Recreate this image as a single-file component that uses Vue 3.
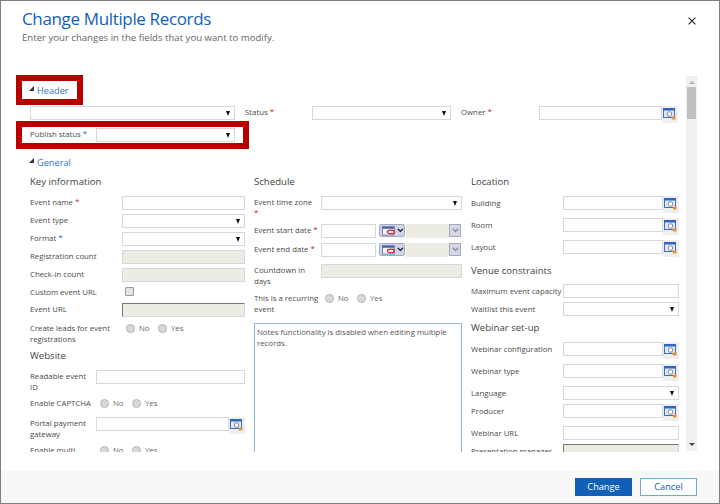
<script setup>
const columns = [
  {
    cls: 'col-a',
    rows: [
      { heading: 'Key information', h: 23 },
      { label: 'Event name', req: 'red', type: 'input', h: 18 },
      { label: 'Event type', type: 'select', h: 18 },
      { label: 'Format', req: 'blue', type: 'select', h: 18 },
      { label: 'Registration count', type: 'readonly', h: 18 },
      { label: 'Check-in count', type: 'readonly', h: 18 },
      { label: 'Custom event URL', type: 'check', h: 17 },
      { label: 'Event URL', type: 'inset', h: 19 },
      { label: 'Create leads for event registrations', type: 'radio', h: 25 },
      { heading: 'Website', h: 23 },
      { label: 'Readable event ID', type: 'input', h: 27, narrow: true },
      { label: 'Enable CAPTCHA', type: 'radio', h: 20, narrow: true, nowrap: true },
      { label: 'Portal payment gateway', type: 'lookup', h: 27, narrow: true },
      { label: 'Enable multi session', type: 'radio', h: 24, narrow: true }
    ]
  },
  {
    cls: 'col-b',
    rows: [
      { heading: 'Schedule', h: 23 },
      { label: 'Event time zone', req: 'red', type: 'select', h: 28, breakReq: true },
      { label: 'Event start date', req: 'red', type: 'date', h: 19 },
      { label: 'Event end date', req: 'red', type: 'date', h: 21 },
      { label: 'Countdown in days', type: 'readonly', h: 28 },
      { label: 'This is a recurring event', type: 'radio', h: 31 }
    ]
  },
  {
    cls: 'col-c',
    rows: [
      { heading: 'Location', h: 23 },
      { label: 'Building', type: 'lookup', h: 22 },
      { label: 'Room', type: 'lookup', h: 22 },
      { label: 'Layout', type: 'lookup', h: 22 },
      { heading: 'Venue constraints', h: 22 },
      { label: 'Maximum event capacity', type: 'input', h: 18 },
      { label: 'Waitlist this event', type: 'select', h: 17 },
      { heading: 'Webinar set-up', h: 23 },
      { label: 'Webinar configuration', type: 'lookup', h: 22 },
      { label: 'Webinar type', type: 'lookup', h: 22 },
      { label: 'Language', type: 'select', h: 18 },
      { label: 'Producer', type: 'lookup', h: 22 },
      { label: 'Webinar URL', type: 'input', h: 18 },
      { label: 'Presentation manager', type: 'inset', h: 22 }
    ]
  }
]
</script>

<template>
  <div class="dialog">
    <svg class="defs" width="0" height="0" aria-hidden="true">
      <symbol id="lookup-icon" viewBox="0 0 13 12">
        <rect x="0.5" y="0.5" width="11" height="9" fill="#dfe8f5" stroke="#3f6fb5" />
        <rect x="0" y="0" width="12" height="2.5" fill="#2f66c0" />
        <circle cx="6.5" cy="6" r="2.3" fill="#fff" stroke="#7c7c7c" stroke-width="0.9" />
        <rect x="9" y="8.5" width="3.5" height="3" fill="#e8922c" />
      </symbol>
      <symbol id="cal-icon" viewBox="0 0 16 10">
        <rect x="0.5" y="0.5" width="13" height="9" fill="#f2f2f8" stroke="#6d78a8" />
        <rect x="0" y="0" width="14" height="2.5" fill="#4a62a8" />
        <ellipse cx="10" cy="6" rx="4" ry="2" fill="none" stroke="#d3202a" stroke-width="1.3" />
      </symbol>
    </svg>

    <header class="head">
      <div>
        <h1 class="title">Change Multiple Records</h1>
        <p class="subtitle">Enter your changes in the fields that you want to modify.</p>
      </div>
      <svg class="close" width="8" height="8" viewBox="0 0 8 8">
        <path d="M.6.6l6.8 6.8M7.4.6L.6 7.4" stroke="#222" stroke-width="1.1" fill="none" />
      </svg>
    </header>

    <div class="viewport">
      <main class="content">
        <div class="section"><i class="tri"></i>Header</div>
        <div class="header-row first">
          <div class="field select w205"><i class="caret"></i></div>
          <span class="hlabel status">Status <b class="req red">*</b></span>
          <div class="field select w139"><i class="caret"></i></div>
          <span class="hlabel owner">Owner <b class="req red">*</b></span>
          <div class="lookup w139">
            <div class="field"></div>
            <span class="lookup-btn"><svg width="13" height="12"><use href="#lookup-icon" /></svg></span>
          </div>
        </div>
        <div class="header-row second">
          <span class="hlabel publish">Publish status <b class="req blue">*</b></span>
          <div class="field select w139"><i class="caret"></i></div>
        </div>
        <div class="section general"><i class="tri"></i>General</div>

        <div class="columns">
          <div v-for="col in columns" :key="col.cls" class="col" :class="col.cls">
            <template v-for="row in col.rows" :key="row.label || row.heading">
              <h2 v-if="row.heading" class="heading" :style="{ height: row.h + 'px' }">{{ row.heading }}</h2>
              <div v-else class="row" :class="{ narrow: row.narrow, nowrap: row.nowrap }" :style="{ height: row.h + 'px' }">
                <label class="label">{{ row.label }}<br v-if="row.breakReq" /><b v-if="row.req" class="req" :class="row.req"> *</b></label>
                <div class="control">
                  <div v-if="row.type === 'input'" class="field"></div>
                  <div v-else-if="row.type === 'readonly'" class="field readonly"></div>
                  <div v-else-if="row.type === 'inset'" class="field readonly inset"></div>
                  <div v-else-if="row.type === 'select'" class="field select"><i class="caret"></i></div>
                  <div v-else-if="row.type === 'check'" class="check"></div>
                  <div v-else-if="row.type === 'radio'" class="radios">
                    <i class="radio"></i><span class="opt no">No</span>
                    <i class="radio"></i><span class="opt">Yes</span>
                  </div>
                  <div v-else-if="row.type === 'lookup'" class="lookup">
                    <div class="field"></div>
                    <span class="lookup-btn"><svg width="13" height="12"><use href="#lookup-icon" /></svg></span>
                  </div>
                  <div v-else-if="row.type === 'date'" class="date">
                    <div class="field date-input"></div>
                    <span class="cal-btn">
                      <svg width="15" height="10"><use href="#cal-icon" /></svg>
                      <svg width="7" height="5" viewBox="0 0 7 5"><path d="M.8.8l2.7 2.7L6.2.8" fill="none" stroke="#111" stroke-width="1.3" /></svg>
                    </span>
                    <div class="field readonly time"></div>
                    <span class="time-btn"><svg width="7" height="5" viewBox="0 0 7 5"><path d="M.8.8l2.7 2.7L6.2.8" fill="none" stroke="#8a8a9a" stroke-width="1.3" /></svg></span>
                  </div>
                </div>
              </div>
            </template>
            <div v-if="col.cls === 'col-b'" class="notes">Notes functionality is disabled when editing multiple records.</div>
          </div>
        </div>
      </main>

      <div class="scrollbar">
        <i class="arrow up"></i>
        <i class="thumb"></i>
        <i class="arrow down"></i>
      </div>
    </div>

    <footer class="foot">
      <button class="btn primary">Change</button>
      <button class="btn">Cancel</button>
    </footer>

    <div class="mark mark-header"></div>
    <div class="mark mark-publish"></div>
  </div>
</template>

<style scoped>
.dialog {
  position: relative;
  width: 720px;
  height: 504px;
  box-sizing: border-box;
  display: flex;
  flex-direction: column;
  background: #fff;
  border: 1px solid #7f7f7f;
  font-family: "Open Sans", "Liberation Sans", sans-serif;
  font-size: 7.8px;
  color: #4a4a4a;
  overflow: hidden;
}
.defs { position: absolute; }
.head {
  height: 75px;
  flex: none;
  display: flex;
  justify-content: space-between;
  padding: 0 23px 0 21px;
  box-sizing: border-box;
}
.title {
  margin: 6px 0 0;
  font-size: 17px;
  line-height: 24px;
  font-weight: 400;
  letter-spacing: -0.35px;
  color: #1160b7;
}
.subtitle {
  margin: 0;
  font-size: 9.6px;
  line-height: 13px;
  color: #666;
}
.close { margin-top: 16px; }
.viewport {
  height: 376px;
  flex: none;
  display: flex;
  overflow: hidden;
}
.content {
  width: 678px;
  padding: 6px 0 0 29px;
  margin-right: 7px;
  flex: none;
  box-sizing: border-box;
}
.section {
  height: 24px;
  display: flex;
  align-items: center;
  padding-bottom: 8px;
  box-sizing: border-box;
  gap: 3px;
  font-size: 9.2px;
  color: #2f76c3;
  margin-left: -1px;
}
.section.general { padding-bottom: 0; height: 22px; }
.tri {
  width: 0;
  height: 0;
  border-left: 5px solid transparent;
  border-bottom: 5px solid #333;
  margin-top: -3px;
}
.header-row {
  display: flex;
  align-items: flex-start;
}
.header-row.first { height: 22px; }
.header-row.second { height: 23px; }
.hlabel { line-height: 13px; flex: none; }
.status { width: 67px; margin-left: 10px; }
.owner { width: 78px; margin-left: 10px; }
.publish { width: 66px; }
.w205 { width: 205px; flex: none; }
.w139 { width: 139px; flex: none; }
.columns {
  display: flex;
  gap: 9px;
}
.col { flex: none; }
.col-a { width: 215px; }
.col-b { width: 208px; }
.col-c { width: 208px; }
.heading {
  margin: 0;
  padding-top: 2px;
  box-sizing: border-box;
  font-size: 9.6px;
  line-height: 13px;
  font-weight: 400;
  color: #444;
}
.row {
  display: flex;
  align-items: flex-start;
}
.label {
  flex: none;
  line-height: 11px;
  padding-top: 1px;
}
.col-a .label { width: 92px; padding-right: 6px; box-sizing: border-box; }
.col-a .narrow .label { width: 66px; }
.col-a .nowrap .label { white-space: nowrap; padding-right: 0; }
.col-b .label { width: 67px; padding-right: 2px; box-sizing: border-box; }
.col-c .label { width: 92px; white-space: nowrap; padding-top: 2px; }
.control { flex: 1; min-width: 0; }
.field {
  height: 14px;
  box-sizing: border-box;
  background: #fff;
  border: 1px solid #d8d8d8;
}
.select {
  display: flex;
  align-items: center;
  justify-content: flex-end;
  padding-right: 4px;
}
.caret {
  width: 0;
  height: 0;
  border-left: 2.5px solid transparent;
  border-right: 2.5px solid transparent;
  border-top: 5px solid #111;
}
.readonly { background: #ecece4; }
.inset {
  border-top: 1px solid #777;
  border-left: 1px solid #777;
}
.lookup { display: flex; align-items: flex-start; }
.lookup .field { flex: 1; min-width: 0; }
.lookup-btn {
  width: 16px;
  height: 17px;
  flex: none;
  box-sizing: border-box;
  padding: 2px 0 0 1px;
  background: #eee;
  display: block;
}
.lookup-btn svg { display: block; }
.check {
  width: 9px;
  height: 9px;
  box-sizing: border-box;
  margin: 1px 0 0 3px;
  border: 1px solid #9a9a9a;
  border-radius: 1px;
  background: #e4e4e4;
}
.radios {
  display: flex;
  align-items: center;
  height: 12px;
  padding-left: 4px;
  color: #666;
}
.radio {
  width: 9px;
  height: 9px;
  box-sizing: border-box;
  border-radius: 50%;
  border: 1px solid #b5b5b5;
  background: #d8d8d8;
  flex: none;
}
.opt { margin-left: 4px; }
.opt.no { width: 15px; margin-right: 4px; }
.date { display: flex; align-items: flex-start; }
.date-input { width: 55px; flex: none; }
.cal-btn {
  width: 26px;
  height: 13px;
  margin: 0 1px 0 3px;
  flex: none;
  box-sizing: border-box;
  border: 1px solid #a4a8c4;
  border-radius: 2px;
  background: #d0d4e8;
  display: flex;
  align-items: center;
  gap: 1px;
  padding-left: 2px;
}
.time { width: 43px; flex: none; border-color: #ecece4; }
.time-btn {
  width: 12px;
  height: 13px;
  flex: none;
  box-sizing: border-box;
  border: 1px solid #a4a8c4;
  background: #d8d8e4;
  display: flex;
  align-items: center;
  justify-content: center;
}
.notes {
  height: 150px;
  box-sizing: border-box;
  border: 1px solid #8fb6e0;
  padding: 3px 2px;
  line-height: 11px;
  color: #555;
}
.req { font-weight: 400; font-size: 8px; line-height: 8px; position: relative; top: -1px; }
.req.red { color: #d01818; }
.req.blue { color: #1a66c8; }
.scrollbar {
  width: 11px;
  height: 375px;
  flex: none;
  background: #f0f0f0;
  display: flex;
  flex-direction: column;
  align-items: center;
}
.thumb {
  width: 9px;
  height: 32px;
  background: #c0c0c0;
  flex: none;
  margin-top: 3px;
}
.arrow {
  width: 0;
  height: 0;
  border-left: 3px solid transparent;
  border-right: 3px solid transparent;
  flex: none;
}
.arrow.up { border-bottom: 3px solid #b0b0b0; margin-top: 5px; }
.arrow.down { border-top: 3px solid #444; margin-top: auto; margin-bottom: 5px; }
.foot {
  margin-top: auto;
  height: 32px;
  flex: none;
  background: #f8f8f8;
  display: flex;
  justify-content: flex-end;
  align-items: flex-start;
  gap: 8px;
  padding: 7px 22px 0 0;
  box-sizing: border-box;
}
.btn {
  width: 57px;
  height: 18px;
  box-sizing: border-box;
  padding: 0;
  border: 1px solid #66aee0;
  background: #fff;
  color: #1160b7;
  font-family: inherit;
  font-size: 9.2px;
  line-height: 14px;
}
.btn.primary {
  background: #1160b7;
  border-color: #1160b7;
  color: #fff;
}
.mark {
  position: absolute;
  box-sizing: border-box;
  border: 6px solid #b90000;
  pointer-events: none;
}
.mark-header { left: 15px; top: 74px; width: 67px; height: 30px; }
.mark-publish { left: 15px; top: 120px; width: 233px; height: 28px; }
</style>
